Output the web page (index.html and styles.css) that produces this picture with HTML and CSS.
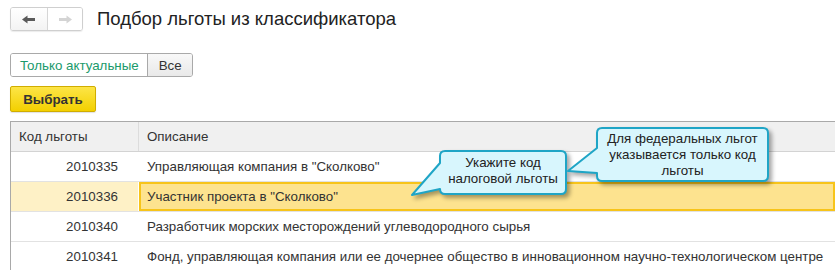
FILE: index.html
```html
<!DOCTYPE html>
<html lang="ru">
<head>
<meta charset="utf-8">
<title>Подбор льготы из классификатора</title>
<link rel="stylesheet" href="styles.css">
</head>
<body>
<div class="page">
  <div class="topbar">
    <div class="nav">
      <button class="nav-btn back" type="button" aria-label="Назад">
        <svg width="14" height="9" viewBox="0 0 14 9"><path d="M0 4.5 L5.5 0.5 V3 H13 V6 H5.5 V8.5 Z" fill="#5a5a5a"/></svg>
      </button>
      <button class="nav-btn fwd" type="button" aria-label="Вперёд">
        <svg width="14" height="9" viewBox="0 0 14 9"><path d="M14 4.5 L8.5 0.5 V3 H1 V6 H8.5 V8.5 Z" fill="#d4d4d4"/></svg>
      </button>
    </div>
    <h1 class="title">Подбор льготы из классификатора</h1>
  </div>

  <div class="filters">
    <div class="toggle">
      <span class="toggle-item active">Только актуальные</span>
      <span class="toggle-item">Все</span>
    </div>
  </div>

  <div class="actions">
    <button class="btn-primary" type="button">Выбрать</button>
  </div>

  <div class="table">
    <div class="row head">
      <div class="cell code">Код льготы</div>
      <div class="cell desc">Описание</div>
    </div>
    <div class="row">
      <div class="cell code num">2010335</div>
      <div class="cell desc">Управляющая компания в "Сколково"</div>
    </div>
    <div class="row sel">
      <div class="cell code num">2010336</div>
      <div class="cell desc">Участник проекта в "Сколково"</div>
    </div>
    <div class="row">
      <div class="cell code num">2010340</div>
      <div class="cell desc">Разработчик морских месторождений углеводородного сырья</div>
    </div>
    <div class="row">
      <div class="cell code num">2010341</div>
      <div class="cell desc">Фонд, управляющая компания или ее дочернее общество в инновационном научно-технологическом центре</div>
    </div>
  </div>

  <div class="callout callout-1">
    <svg class="callout-shape" width="160" height="50" viewBox="0 0 160 50">
      <path d="M35 2 H151 Q156 2 156 7 V40 Q156 45 151 45 H35 Q30 45 30 40 V40 L2 46 L30 14 V7 Q30 2 35 2 Z" fill="#d8f6fd" stroke="#1fa5c6" stroke-width="2" stroke-linejoin="round"/>
    </svg>
    <div class="callout-text">Укажите код<br>налоговой льготы</div>
  </div>

  <div class="callout callout-2">
    <svg class="callout-shape" width="210" height="62" viewBox="0 0 210 62">
      <path d="M36 2 H197 Q202 2 202 7 V50 Q202 55 197 55 H36 Q31 55 31 50 V47 L2 45 L31 22 V7 Q31 2 36 2 Z" fill="#d8f6fd" stroke="#1fa5c6" stroke-width="2" stroke-linejoin="round"/>
    </svg>
    <div class="callout-text">Для федеральных льгот<br>указывается только код<br>льготы</div>
  </div>
</div>
</body>
</html>
```
FILE: styles.css
```css
html, body {
  margin: 0;
  padding: 0;
  background: #fff;
  overflow: hidden;
}

.page {
  position: relative;
  padding: 7px 0 0 10px;
  font-family: "Liberation Sans", Arial, sans-serif;
  font-size: 13.33px;
  color: #333;
}

.topbar {
  display: flex;
  align-items: center;
  height: 24px;
}

.nav {
  display: flex;
  height: 24px;
  border: 1px solid #cfcfcf;
  border-radius: 3px;
  box-sizing: border-box;
  box-shadow: 0 1px 1px rgba(0,0,0,0.08);
  overflow: hidden;
}

.nav-btn {
  display: flex;
  align-items: center;
  justify-content: center;
  margin: 0;
  padding: 0;
  border: 0;
  background: linear-gradient(#ffffff, #f3f3f3);
  height: 22px;
}

.nav-btn.back {
  width: 37px;
  border-right: 1px solid #d6d6d6;
}

.nav-btn.fwd {
  width: 34px;
  background: #fff;
}

.title {
  margin: 0 0 0 14px;
  font-size: 18.5px;
  font-weight: normal;
  color: #222;
  line-height: 24px;
}

.filters {
  margin-top: 22px;
  display: flex;
}

.toggle {
  display: flex;
  height: 24px;
  border: 1px solid #a9a9a9;
  border-radius: 3px;
  box-sizing: border-box;
  overflow: hidden;
}

.toggle-item {
  display: flex;
  align-items: center;
  padding: 0 10px 0 11px;
  background: linear-gradient(#f8f8f8, #e9e9e9);
  color: #333;
  font-size: 13.33px;
  white-space: nowrap;
}

.toggle-item.active {
  background: #fff;
  color: #1a9a6b;
  border-right: 1px solid #a9a9a9;
  padding: 0 8px 0 9px;
}

.actions {
  margin-top: 9px;
  display: flex;
}

.btn-primary {
  width: 86px;
  height: 26px;
  margin: 0;
  padding: 0;
  border: 1px solid #d0ad00;
  border-radius: 2px;
  background: linear-gradient(#fde547, #f3d000);
  font-family: "Liberation Sans", Arial, sans-serif;
  font-size: 13.33px;
  font-weight: bold;
  color: #333;
  box-shadow: 0 1px 1px rgba(0,0,0,0.12);
}

.table {
  margin-top: 9px;
  border-top: 1px solid #a9a9a9;
  border-left: 1px solid #a9a9a9;
}

.row {
  display: grid;
  grid-template-columns: 128px 1fr;
  height: 30px;
  box-sizing: border-box;
  border-bottom: 1px solid #e2e2e2;
}

.row.head {
  background: #f0f0f0;
  border-bottom: 1px solid #d3d3d3;
}

.cell {
  display: flex;
  align-items: center;
  padding: 0 8px;
  white-space: nowrap;
  overflow: hidden;
  box-sizing: border-box;
}

.code {
  border-right: 1px solid #fff;
}

.row.head .code {
  border-right: 1px solid #dcdcdc;
}

.num {
  justify-content: flex-end;
  padding-right: 20px;
}

.row.sel .code {
  background: #fef1c6;
}

.row.sel .desc {
  background: #fde38f;
  box-shadow: inset 0 0 0 2px #f7c41a;
}

.callout {
  position: absolute;
}

.callout-shape {
  position: absolute;
  left: 0;
  top: 0;
  overflow: visible;
  filter: drop-shadow(3px 3px 2px rgba(0,0,0,0.35));
}

.callout-text {
  position: absolute;
  text-align: center;
  font-size: 13.33px;
  line-height: 16px;
  color: #222;
}

.callout-1 {
  left: 410px;
  top: 149px;
  width: 160px;
  height: 50px;
}

.callout-1 .callout-text {
  left: 30px;
  top: 6px;
  width: 126px;
}

.callout-2 {
  left: 566px;
  top: 126px;
  width: 210px;
  height: 62px;
}

.callout-2 .callout-text {
  left: 31px;
  top: 5px;
  width: 171px;
}
```
